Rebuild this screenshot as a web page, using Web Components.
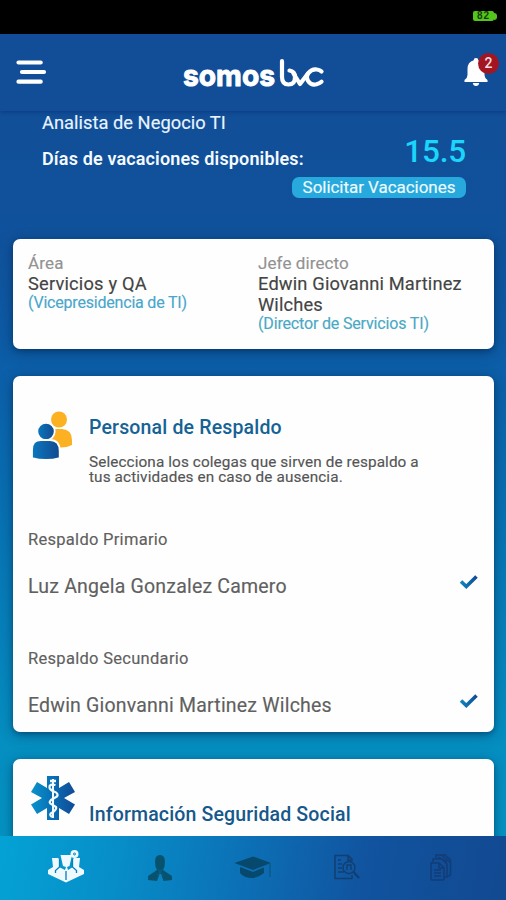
<!DOCTYPE html>
<html lang="es">
<head>
<meta charset="utf-8">
<title>somos bvc</title>
<style>
html,body{margin:0;height:900px;overflow:hidden;background:#000;font-family:Roboto,"Liberation Sans",sans-serif}
</style>
</head>
<body>
<bvc-app></bvc-app>
<script>
const define = (name, html, setup) => customElements.define(name, class extends HTMLElement {
  connectedCallback() {
    if (this.shadowRoot) return;
    const t = document.createElement('template');
    t.innerHTML = html;
    this.attachShadow({mode: 'open'}).append(t.content.cloneNode(true));
    if (setup) setup(this, this.shadowRoot);
  }
});

// One line of text, tracked so that it fills the width given in "w".
define('text-line', `<style>
  :host{display:block;white-space:nowrap;height:20px;line-height:20px;-webkit-text-stroke:var(--ink,.15px) currentColor}
  span{display:inline-block}
</style><span><slot></slot></span>`, (el, root) => {
  const span = root.querySelector('span');
  el.style.fontSize = el.getAttribute('size') + 'px';
  const w = parseFloat(el.getAttribute('w'));
  const n = el.textContent.length;
  const natural = span.getBoundingClientRect().width;
  if (w && natural) span.style.letterSpacing = ((w + .8 - natural) / n) + 'px';
});

define('status-bar', `<style>
  :host{display:flex;height:34px;background:#000;justify-content:flex-end;align-items:flex-start;box-sizing:border-box;padding:11px 9px 0 0}
  .b{width:21px;height:10px;background:#53c51c;border-radius:2px;font:bold 10px/10.5px "Liberation Sans",sans-serif;color:#143d04;text-align:center;letter-spacing:1px}
  i{width:3px;height:7px;margin-top:1.5px;background:#53c51c;border-radius:0 3px 3px 0}
</style><div class="b">82</div><i></i>`);

define('brand-logo', `<style>:host{display:block;width:142px;height:34px}svg{display:block;overflow:visible}text{font:700 29.500px Inter,sans-serif}</style>
<svg width="142" height="34" viewBox="0 0 142 34">
 <g fill="none" stroke="#fff" stroke-width="4.200" stroke-linejoin="round">
  <path stroke-linecap="round" d="M99 3.200V19Q99 26.500 105.500 26.500Q112 26.500 112 19.200Q112 13.200 106.500 12.500"/>
  <path d="M110.500 15.500L117 26L125 15.500Q129 10.500 134 11.500Q137 12 138.500 13.500" stroke-linecap="round"/>
  <path d="M125 15.500Q122.500 19 125 22.800Q128 27.500 133.500 26.300Q136.500 25.500 138.500 23.700" stroke-linecap="round"/>
 </g>
 <text x="0" y="28" fill="#fff" stroke="#fff" stroke-width="1" stroke-linejoin="round" textLength="92" lengthAdjust="spacingAndGlyphs">somos</text>
</svg>`);

define('alert-bell', `<style>
  :host{display:block;position:relative;width:24px;height:29px}svg{display:block}
  b{position:absolute;left:14px;top:-5px;width:21px;height:21px;border-radius:50%;background:#a31621;color:#f5dfe1;font:500 14px/21px Roboto,sans-serif;text-align:center}
</style><svg width="24" height="29" viewBox="0 0 24 29"><path fill="#fff" d="M9.700 2.300Q9.700 0 12 0Q14.300 0 14.300 2.300Q20.500 4 20.500 11V17Q20.500 20 23.500 22V24H.500V22Q3.500 20 3.500 17V11Q3.500 4 9.700 2.300ZM8.800 25H15.200Q14.800 28 12 28Q9.200 28 8.800 25Z"/></svg><b>2</b>`);

define('top-bar', `<style>
  :host{display:flex;height:77px;box-sizing:border-box;align-items:flex-start;justify-content:space-between;padding:24px 18px 0 16px;background:#124e98;box-shadow:0 1px 4px rgba(0,25,90,.38);position:relative;z-index:1;color:#fff}
  .menu{display:block;margin-top:2px}brand-logo{margin:0 4px 0 0}
</style>
<svg class="menu" width="31" height="26" viewBox="0 0 31 26"><path d="M2.500 2.500H24.700M6 12H28M2.500 21.700H24.700" stroke="#fff" stroke-width="4.200" stroke-linecap="round"/></svg>
<brand-logo></brand-logo><alert-bell></alert-bell>`);

define('hero-info', `<style>
  :host{display:grid;grid-template-columns:1fr 174px;height:128px;box-sizing:border-box;padding:2px 40px 0 42px;color:#e9f4ff}
  .r{display:flex;flex-direction:column;align-items:flex-end;margin-top:21px}
  .l{min-width:0}
  .d{margin-top:16px;font-weight:600;color:#f4faff;--ink:0}
  .n{height:36px;line-height:36px;color:#1bd5fb;font-weight:500;--ink:0}
  .pill{margin-top:7px;width:174px;height:21px;border-radius:7px;background:#27a9dd;display:flex;justify-content:center;color:#eefaff}
</style>
<div class="l"><text-line size="18.300" w="183">Analista de Negocio TI</text-line><text-line class="d" size="18" w="261">Días de vacaciones disponibles:</text-line></div>
<div class="r"><text-line class="n" size="31.500" w="61">15.5</text-line><div class="pill"><text-line size="17" w="152">Solicitar Vacaciones</text-line></div></div>`);

define('info-card', `<style>
  :host{display:block;box-sizing:border-box;margin:0 12px 0 13px;padding:0 15px;background:#fefefe;border-radius:7px;box-shadow:0 2px 4px rgba(0,25,70,.3),0 3px 14px rgba(0,25,60,.38)}
</style><slot></slot>`);

define('area-info', `<style>
  :host{display:grid;grid-template-columns:230px 1fr;height:109.500px;box-sizing:border-box;padding-top:15px;color:#444}
  .l{color:#929292;margin-top:-1px;height:21px}.s{color:#49a6cc;margin-top:-1px}.n{color:#444}
  .t .s{color:#49a9c5}
</style>
<div><text-line class="l" size="17" w="35">Área</text-line><text-line class="n" size="18.300" w="118">Servicios y QA</text-line><text-line class="s" size="16" w="158">(Vicepresidencia de TI)</text-line></div>
<div class="t"><text-line class="l" size="17" w="90">Jefe directo</text-line><text-line class="n" size="18.300" w="203">Edwin Giovanni Martinez</text-line><text-line class="n" style="margin-top:1px" size="18.300" w="64">Wilches</text-line><text-line class="s" size="16" w="170">(Director de Servicios TI)</text-line></div>`);

define('check-mark', `<style>:host{display:block}svg{display:block}</style>
<svg width="20" height="16" viewBox="0 0 20 16"><defs><linearGradient id="g"><stop stop-color="#0d86bd"/><stop offset="1" stop-color="#114c93"/></linearGradient></defs><path d="M2 7.500L7.300 12.500L17.500 2.500" fill="none" stroke="url(#g)" stroke-width="3.600"/></svg>`);

define('backup-person', `<style>
  :host{display:block;color:#606060}
  .row{display:flex;justify-content:space-between;align-items:flex-start;margin-top:27px}
  check-mark{margin:-3px 0 0}
</style><slot name="role"></slot><div class="row"><slot></slot><check-mark></check-mark></div>`);

define('team-icon', `<style>:host{display:block}svg{display:block}</style>
<svg width="42" height="50" viewBox="0 0 42 50"><defs><linearGradient id="g"><stop stop-color="#0a78be"/><stop offset="1" stop-color="#124990"/></linearGradient></defs>
<g fill="#fbb122"><circle cx="27" cy="8.500" r="8"/><path d="M16 36V27Q16 18 25 18H30Q40 18.500 40 29V34Q34 37 27 36.500Z"/></g>
<g fill="url(#g)" stroke="#fefefe" stroke-width="1.800"><circle cx="14" cy="20.500" r="8.700"/><path d="M0 47V39Q0 29 9 29H18Q27.700 29 27.700 40V47Q14 51 0 47Z"/></g></svg>`);

define('medical-icon', `<style>:host{display:block}svg{display:block}</style>
<svg width="44" height="44" viewBox="0 0 44 44"><defs><linearGradient id="g"><stop stop-color="#0993ce"/><stop offset=".4" stop-color="#0875b8"/><stop offset="1" stop-color="#124a96"/></linearGradient></defs>
<path fill="url(#g)" d="M16 0H28V12L38 6L44 16L33 22L44 28.500L38 38L28 32V44H16V32L6 38L0 28.500L11 22L0 16L6 6L16 12Z"/>
<g stroke="#f2fbff" fill="none"><path d="M22 3V42" stroke-width="2"/><path d="M19 5H25M24.500 9Q18 7.500 18.500 11.500Q19 14 23 15.500Q28 17.500 26 20.500L20 24Q17 27 21 28.500L25 31Q26 33 22 36Q17 38 21 41" stroke-width="2.300"/></g></svg>`);

define('backup-section', `<style>
  :host{display:block;height:355.500px;box-sizing:border-box;padding-top:34px}
  .head{display:flex}team-icon{width:42px;margin:1px 15px 0 4px}
  .title{color:#156295;font-weight:500;margin-top:8px;--ink:0}
  .desc{color:#555;height:15.500px;line-height:15.500px}.first{margin-top:16.500px}
  backup-person{margin-top:44px}.second{margin-top:52px}
</style>
<div class="head"><team-icon></team-icon><div>
<text-line class="title" size="19.500" w="192">Personal de Respaldo</text-line>
<text-line class="desc first" size="15.300" w="329">Selecciona los colegas que sirven de respaldo a</text-line>
<text-line class="desc" size="15.300" w="253">tus actividades en caso de ausencia.</text-line></div></div>
<backup-person><text-line slot="role" size="16.500" w="139">Respaldo Primario</text-line><text-line size="19.500" w="258">Luz Angela Gonzalez Camero</text-line></backup-person>
<backup-person class="second"><text-line slot="role" size="16.500" w="160">Respaldo Secundario</text-line><text-line size="19.500" w="303">Edwin Gionvanni Martinez Wilches</text-line></backup-person>`);

define('security-section', `<style>
  :host{display:flex;height:100px;box-sizing:border-box;padding-top:17px}
  medical-icon{margin:0 14px 0 3px}.t{margin:29px 0 0;color:#16588b;font-weight:500;--ink:0}
</style><medical-icon></medical-icon><text-line class="t" size="19.500" w="261">Información Seguridad Social</text-line>`);

define('tab-bar', `<style>
  :host{display:flex;justify-content:space-around;align-items:flex-start;box-sizing:border-box;height:64px;padding:14px 19.500px 0;background:linear-gradient(100deg,#04a2d5 0%,#078dc8 24%,#0c70b6 48%,#11539f 72%,#124991 100%);flex:none;position:relative}
  svg{display:block;width:40px;height:36px}
</style>
<svg viewBox="0 0 40 36"><g fill="#eefaff"><path d="M6 8H12L14 10L13 17L19 20L20 17L17 16L14.500 5H26L23.500 16L21 17L22 20L27 17L26 10L28 8H34L33 17L38 20V24L20 32.500L2 24V20L7 17Z"/><circle cx="28.500" cy="4" r="4"/></g><g fill="none" stroke="#087fb8"><path d="M13.500 9V17L9.500 20.500V23M26.500 9V17L30.500 20.500V23M20 21V30" stroke-width="1.300"/><circle cx="28.500" cy="4" r="1"/></g></svg>
<svg viewBox="0 0 40 36"><path fill="#07536f" d="M20 5Q25 5 25 12Q25 17 23 20L32 26V30L23.500 31L21 24L19.500 24L17 31L8 30V26L17 20Q15 17 15 12Q15 5 20 5Z"/><path d="M18 19L23 26M22 19L17 26" stroke="#086088" stroke-width="1"/></svg>
<svg viewBox="0 0 40 36"><g fill="#06496c"><path d="M1.500 13L20 6.500L38 13L20 20Z"/><path d="M7 17L20 22L31 17.500V23Q25 28 19 28Q11 28 7 23Z"/></g><path d="M37 13V27" stroke="#0b5b83" stroke-width="1.400"/></svg>
<svg viewBox="0 0 40 36"><g fill="none" stroke="#113f72" stroke-width="1.500"><path d="M26 11V9L22 5.500H9V28.500H26V25M22 5.500V10H26M12 10H15M12 14H16M12 18H16M12 22H18"/><circle cx="23" cy="17.500" r="6"/><path d="M27.500 22L33 28" stroke-width="2.500"/><path d="M21 20V15H25V20" /></g></svg>
<svg viewBox="0 0 40 36"><g fill="none" stroke="#123c76" stroke-width="1.500"><path d="M11 13H19L24 18V29Q24 30 23 30H12Q11 30 11 29Z M19 13V18H24M14 20H21M14 23H21M14 26H21"/><path d="M13 12V9H22L27 14V27H24M16 8V5H25L30.500 10V24Q30.500 26 28 26M18 7L27 12M21 5L30 12"/></g></svg>`);

define('bvc-app', `<style>
  :host{display:flex;flex-direction:column;width:506px;height:900px;overflow:hidden}
  main{flex:1;min-height:0;overflow:hidden;background:linear-gradient(180deg,#114f98 0,#10519b 16%,#0c5da7 34%,#0870b2 54%,#058dc0 84%,#0493c3 100%)}
  .gap{margin-top:27.500px}
</style>
<status-bar></status-bar><top-bar></top-bar>
<main><hero-info></hero-info>
<info-card><area-info></area-info></info-card>
<info-card class="gap"><backup-section></backup-section></info-card>
<info-card class="gap"><security-section></security-section></info-card></main>
<tab-bar></tab-bar>`);
</script>
</body>
</html>
